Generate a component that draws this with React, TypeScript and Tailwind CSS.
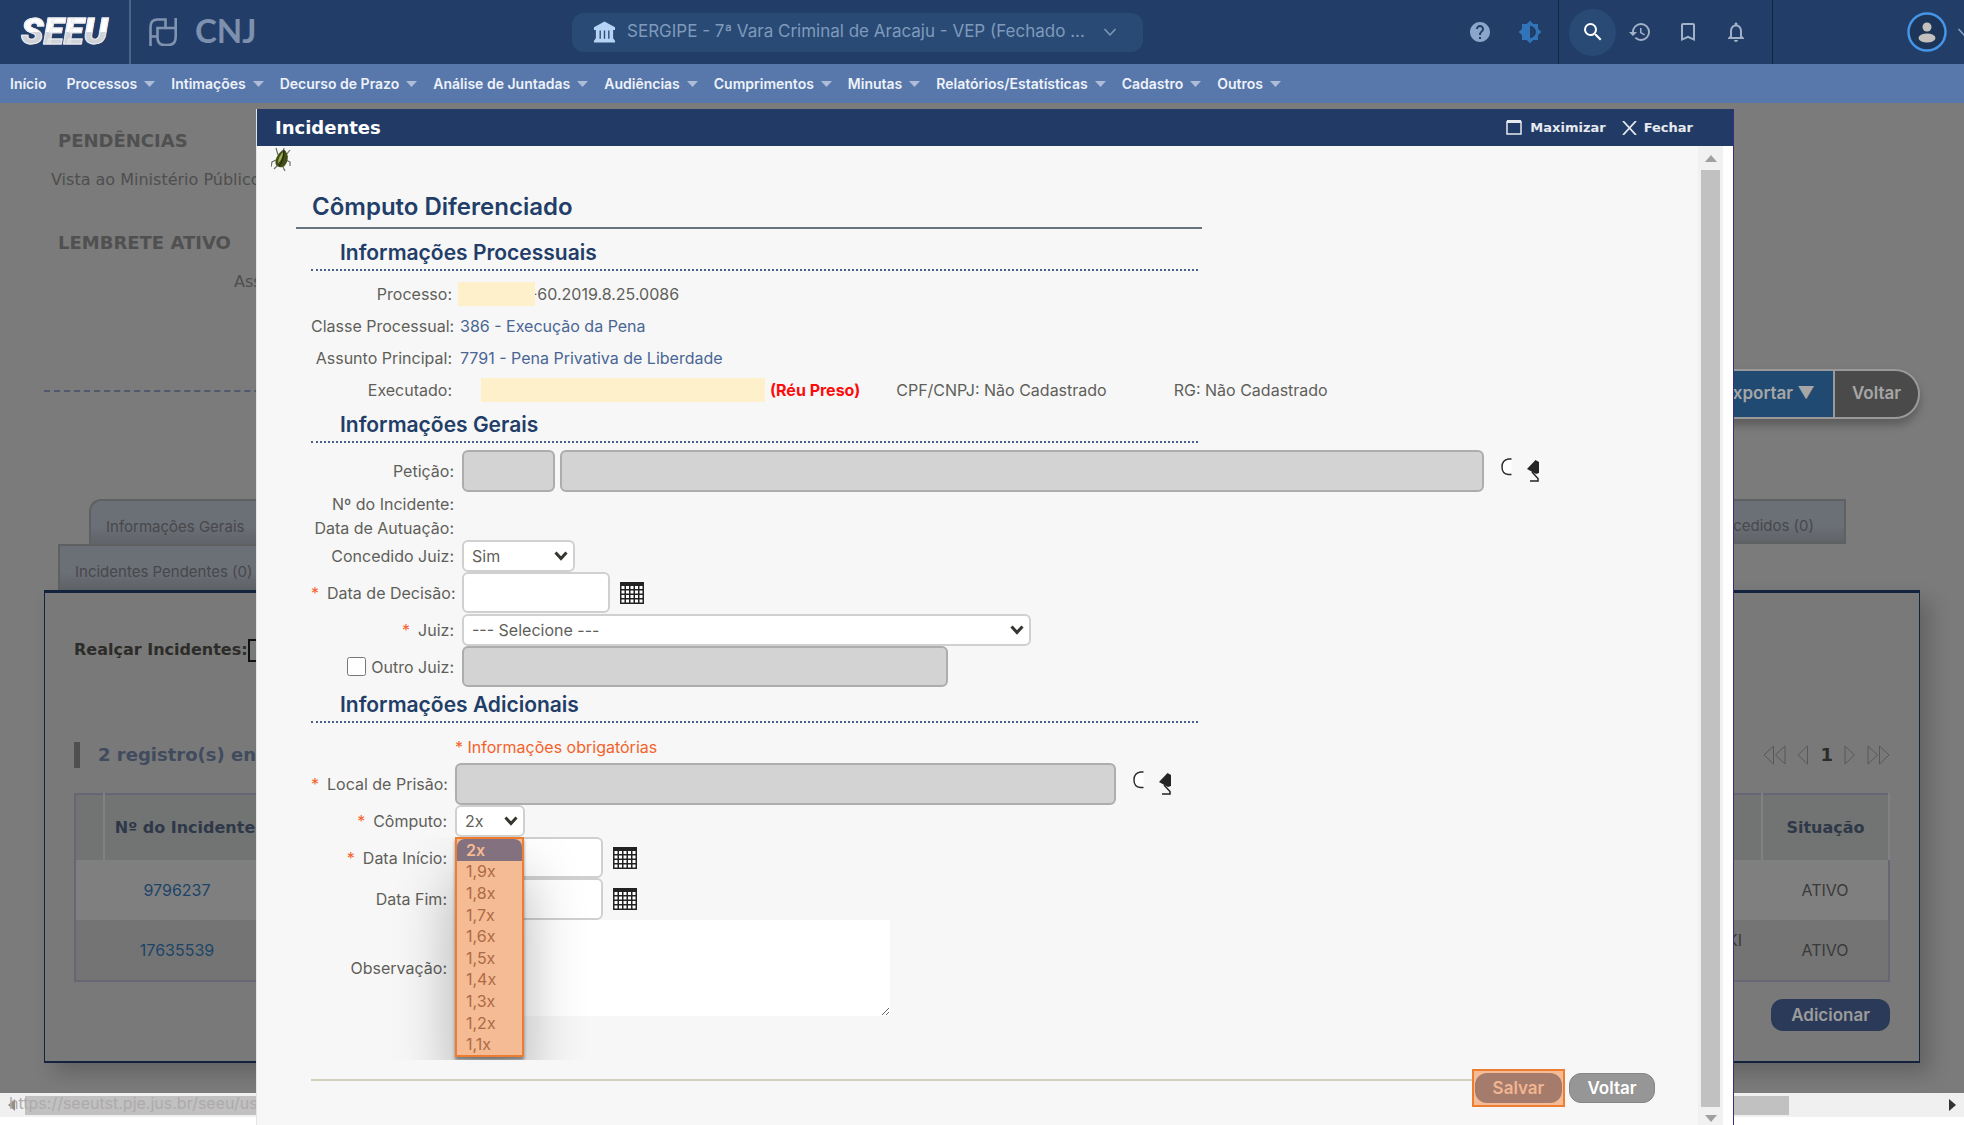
import type { ReactNode } from "react";
import {
  MdBookmarkBorder,
  MdBrightness6,
  MdHelp,
  MdHistory,
  MdNotificationsNone,
  MdSearch,
} from "react-icons/md";

const MENU = [
  "Processos",
  "Intimações",
  "Decurso de Prazo",
  "Análise de Juntadas",
  "Audiências",
  "Cumprimentos",
  "Minutas",
  "Relatórios/Estatísticas",
  "Cadastro",
  "Outros",
];

const FACTORS = ["2x", "1,9x", "1,8x", "1,7x", "1,6x", "1,5x", "1,4x", "1,3x", "1,2x", "1,1x"];

function Chevron({ className }: { className: string }) {
  return (
    <svg viewBox="0 0 14 10" className={className} fill="none" stroke="currentColor" strokeWidth="1.5">
      <path d="M1.5 2 7 8l5.500-6" />
    </svg>
  );
}

function Header() {
  return (
    <header className="grid h-16 grid-cols-[572fr_571px_821fr] items-center overflow-hidden bg-[#223e68]">
      <div className="flex h-full items-center">
        <div className="flex h-full w-[131px] items-center border-r-2 border-[#49648b] pl-[21px]">
          <span className="bg-gradient-to-b from-white from-50% to-[#cfd3d8] to-50% bg-clip-text pr-1 font-[Roboto] text-[37px] leading-9 font-black text-transparent italic [-webkit-text-stroke:1px_#e9ebee]">
            SEEU
          </span>
        </div>
        <svg viewBox="0 0 28 28" className="ml-[18px] h-7 w-7" fill="none" stroke="#8093b0" strokeWidth="2.600">
          <path d="M1.500 28V9q0-7.500 7-7.500h8V10h-8v9.500q0 7.500 7 7.500h3.500q7.700 0 7.700-8V0" />
          <path d="M1.500 18.500h7M16.500 10h10" />
        </svg>
        <span className="ml-[18px] pb-1 font-[Lato] text-[33px] leading-8 font-bold text-[#7d90ae]">CNJ</span>
      </div>

      <button className="flex h-[39px] items-center rounded-xl bg-[#294a75] pl-[21px] text-[17px] text-[#7f9abc]">
        <svg viewBox="0 0 24 22" className="mr-[11px] h-[22px] w-[23px]" fill="#b5d3f5">
          <path d="M12 0 23 6v3h-2v9h1v1.500h1V22H1v-2.500h1V18h1V9H1V6z" />
          <path d="M7.500 9.500v8.500M12 9.500v8.500M16.500 9.500v8.500" stroke="#294a75" strokeWidth="1.400" />
        </svg>
        <span className="whitespace-nowrap">SERGIPE - 7ª Vara Criminal de Aracaju - VEP (Fechado ...</span>
        <Chevron className="ml-[18px] h-[10px] w-[14px]" />
      </button>

      <div className="flex h-full items-center justify-end text-2xl">
        <button aria-label="Ajuda" className="text-[#8ba6c8]">
          <MdHelp />
        </button>
        <button aria-label="Contraste" className="mr-4 ml-[26px] text-[#3274b8]">
          <MdBrightness6 />
        </button>
        <div className="flex h-full items-center gap-6 border-x border-[#14263f] pr-6 pl-[10px] text-[#a3b1c8]">
          <button aria-label="Pesquisar" className="-mr-3 flex h-[47px] w-[47px] items-center justify-center rounded-full bg-[#294a75] text-white">
            <MdSearch />
          </button>
          <button aria-label="Histórico"><MdHistory /></button>
          <button aria-label="Favoritos"><MdBookmarkBorder /></button>
          <button aria-label="Notificações"><MdNotificationsNone /></button>
        </div>
        <button aria-label="Usuário" className="-mr-2 ml-[134px] flex shrink-0 items-center gap-[9px] text-[#8ba6c8]">
          <svg viewBox="0 0 40 40" className="h-10 w-10">
            <circle cx="20" cy="20" r="18.500" fill="#1d3558" stroke="#4695e6" strokeWidth="2.500" />
            <circle cx="20" cy="15" r="4.500" fill="#c4c0bd" />
            <ellipse cx="20" cy="26" rx="8.500" ry="4.500" fill="#c4c0bd" />
          </svg>
          <Chevron className="h-[10px] w-4" />
        </button>
      </div>
    </header>
  );
}

function Nav() {
  return (
    <nav className="flex h-[39px] items-center gap-4 bg-[#5878ac] pl-[10px] text-[14px] font-semibold whitespace-nowrap text-[#eef2f9]">
      <a href="#inicio" className="mr-1">Início</a>
      {MENU.map((m) => (
        <a key={m} href="#menu" className="flex items-center gap-[7px]">
          {m}
          <svg viewBox="0 0 11 6" className="h-[6px] w-[11px]" fill="#aebcd8">
            <path d="M0 0h11L5.500 6z" />
          </svg>
        </a>
      ))}
    </nav>
  );
}

function Pager({ label, flip, twice }: { label: string; flip?: boolean; twice?: boolean }) {
  const single = flip ? "M10.500 1 1 10l9.500 9z" : "M1 1l9.500 9L1 19z";
  const double = flip ? "M10.500 1 1 10l9.500 9zM22 1l-9.500 9 9.500 9z" : "M1 1l9.500 9L1 19zM12.500 1l9.500 9-9.500 9z";
  return (
    <button aria-label={label}>
      <svg
        viewBox={twice ? "0 0 23 20" : "0 0 12 20"}
        className={twice ? "h-5 w-[23px]" : "h-5 w-3"}
        fill="none"
        stroke="#585858"
      >
        <path d={twice ? double : single} />
      </svg>
    </button>
  );
}

function Background() {
  const tab =
    "border-2 border-b-0 border-[#5e6062] bg-gradient-to-b from-[#6b6f76] from-60% to-[#606468] pt-[9px] text-[#48484a]";
  const th = "border-r-2 border-[#7f8280] font-bold text-[#2f3849]";
  return (
    <main className="overflow-hidden bg-[#7b7b7b] pr-11 pb-[30px] pl-11 font-['DejaVu_Sans']">
      <h2 className="mt-[26px] ml-[14px] text-lg leading-6 font-bold text-[#505050]">PENDÊNCIAS</h2>
      <p className="mt-[15px] ml-[7px] text-base leading-6 text-[#4e4e4e]">Vista ao Ministério Público</p>
      <h2 className="mt-[39px] ml-[14px] text-lg leading-6 font-bold text-[#505050]">LEMBRETE ATIVO</h2>
      <p className="mt-[15px] ml-[190px] text-base leading-6 text-[#4e4e4e]">Assunto:</p>

      <div className="mt-[75px] flex">
        <div className="mt-[21px] flex-1 border-t-2 border-dashed border-[#505a6c]" />
        <div className="flex h-[50px] overflow-hidden rounded-r-full border-2 border-[#999] font-[Inter] text-[17px] font-semibold text-[#a6a6a6] shadow-[0_6px_8px_rgba(0,0,0,0.25)]">
          <button className="border-r-2 border-[#999] bg-[#214a72] px-[18px]">Exportar ▼</button>
          <button className="bg-[#4a4a4a] px-[17px]">Voltar</button>
        </div>
      </div>

      <div className="mt-20 font-[Inter] text-[15px]">
        <div className="mr-[74px] ml-[45px] flex justify-between">
          <button className={`${tab} h-[45px] w-[500px] rounded-tl-xl pl-[15px] text-left`}>Informações Gerais</button>
          <button className={`${tab} h-[45px] w-[500px] border-b-2 pr-[30px] text-right`}>Incidentes Concedidos (0)</button>
        </div>
        <button className={`${tab} ml-[14px] block h-[46px] w-[500px] pl-[15px] text-left`}>Incidentes Pendentes (0)</button>
      </div>

      <section className="border border-t-[3px] border-b-2 border-[#13233d] bg-[#797979] pr-[29px] pb-[30px] pl-[29px] shadow-[10px_10px_20px_rgba(0,0,0,0.2)]">
        <label className="mt-[45px] flex h-6 items-center text-base font-bold text-[#2c2c28]">
          Realçar Incidentes:
          <input type="text" className="h-[23px] w-40 border-2 border-[#111]" />
        </label>
        <div className="mt-[80px] flex h-[26px] items-center text-lg font-bold text-[#414b5e]">
          <span className="mr-[18px] h-full w-[6px] bg-[#4f4f4f]" />
          <span className="flex-1">2 registro(s) encontrado(s)</span>
          <div className="flex items-center gap-[11px]">
            <Pager label="Primeira" flip twice />
            <Pager label="Anterior" flip />
            <span className="text-[#2c2c28]">1</span>
            <Pager label="Próxima" />
            <Pager label="Última" twice />
          </div>
        </div>
        <table className="mt-[25px] w-full table-fixed border-2 border-[#686674] text-base">
          <thead>
            <tr className="h-[66px] bg-[#717472]">
              <th className={`${th} w-[29px]`} />
              <th className={`${th} w-[162px]`}>Nº do Incidente</th>
              <th className={th} />
              <th className={`${th} w-[127px]`}>Situação</th>
            </tr>
          </thead>
          <tbody className="text-center font-[Inter] text-[#3a3a3a]">
            <tr className="h-[60px] bg-[#7f7f7f]">
              <td />
              <td className="pr-4 text-[#1c4468]"><a href="#9796237">9796237</a></td>
              <td />
              <td>ATIVO</td>
            </tr>
            <tr className="h-[61px] bg-[#747474]">
              <td />
              <td className="pr-4 text-[#1c4468]"><a href="#17635539">17635539</a></td>
              <td className="pr-5 pb-5 text-right">KI</td>
              <td>ATIVO</td>
            </tr>
          </tbody>
        </table>
        <button className="mt-[17px] ml-auto block h-8 rounded-xl bg-[#2b3a58] px-5 font-[Inter] text-[17px] leading-7 font-semibold text-[#9b9b9b]">
          Adicionar
        </button>
      </section>
    </main>
  );
}

function PageScroll() {
  return (
    <div className="relative flex h-6 items-center bg-[#f0f0f0]">
      <svg viewBox="0 0 7 12" className="ml-2 h-3 w-[7px]" fill="#8e8e8e"><path d="M7 0v12L0 6z" /></svg>
      <div className="mr-[175px] ml-[10px] h-[19px] flex-1 bg-[#c1c1c1]" />
      <svg viewBox="0 0 7 12" className="absolute right-2 h-3 w-[7px]" fill="#333"><path d="M0 0v12l7-6z" /></svg>
      <span className="absolute bottom-1 left-[9px] text-base leading-5 text-[#aeaaaa]">https://seeutst.pje.jus.br/seeu/us</span>
    </div>
  );
}

function Beetle() {
  return (
    <svg viewBox="0 0 20 24" className="h-6 w-5" fill="none">
      <path d="M7 8 5 1M12 6l1-5M15 8l4-5M5 13l-4 2-1 5M7 18l-4 4M15 13l4 2v4M12 20l2 4M14 9l3 1" stroke="#6d6f68" strokeWidth="1.200" />
      <path d="M13 2.500c5 4 5 12 0 17-3 2-8 0-8.500-3C4 11 8 5 13 2.500z" fill="#414f17" />
      <path d="M12 5c-3 3-5 7-5 11 2-1 5-6 5-11z" fill="#a7ad55" />
      <path d="M13 3.500c0 6-2 12-5 15.500" stroke="#1d210b" />
    </svg>
  );
}

function Calendar() {
  return (
    <button aria-label="Abrir calendário" className="ml-[10px]">
      <svg viewBox="0 0 24 22" className="h-[22px] w-6">
        <path d="M0 0h24v22H0z" fill="#222" />
        {[4, 8.5, 13, 17.5].map((y) =>
          [1.5, 6, 10.5, 15, 19.500].map((x) => <rect key={`${x}-${y}`} x={x} y={y} width="3" height="3" fill="#fff" />),
        )}
      </svg>
    </button>
  );
}

function LookupIcons() {
  return (
    <div className="flex pb-[2px]">
      <button aria-label="Pesquisar" className="ml-4 self-start">
        <svg viewBox="0 0 12 18" className="h-[18px] w-3">
          <path d="M11.500 1H8Q2 2.500 2 9t6 8h3.500z" fill="#fff" />
          <path d="M11.500 1H8.500Q2 2 2 9t6.500 7.500h3" fill="none" stroke="#2a2a2a" strokeWidth="1.400" />
        </svg>
      </button>
      <button aria-label="Limpar" className="mt-[2px] ml-[15px]">
        <svg viewBox="0 0 12 22" className="h-[22px] w-3">
          <path d="M8.500 0 12 2v11l-3 1-9-5z" fill="#252525" />
          <path d="M5 12l6 6.500V21H3" fill="none" stroke="#252525" strokeWidth="1.500" />
        </svg>
      </button>
    </div>
  );
}

function SectionTitle({ children }: { children: ReactNode }) {
  return (
    <h2 className="h-[35px] w-[887px] max-w-full border-b-2 border-dotted border-[#4a6089] pl-[29px] text-[21px] leading-[33px] font-semibold text-[#223e68]">
      {children}
    </h2>
  );
}

const LABEL_WIDE = "mr-2 w-[143px] shrink-0 text-right whitespace-nowrap";
const LABEL_NARROW = "mr-2 w-[136px] shrink-0 text-right whitespace-nowrap";

function Row({
  label,
  htmlFor,
  required,
  className,
  narrow,
  children,
}: {
  label: string;
  htmlFor?: string;
  required?: boolean;
  className: string;
  narrow?: boolean;
  children?: ReactNode;
}) {
  return (
    <div className={`flex items-center ${className}`}>
      <label htmlFor={htmlFor} className={narrow ? LABEL_NARROW : LABEL_WIDE}>
        {required && <span className="mr-2 text-[#f4622a]">*</span>}
        {label}
      </label>
      {children}
    </div>
  );
}

const INPUT = "rounded-md border-2 border-[#d0d0d0] bg-white px-2";
const LOCKED = "rounded-md border-2 border-[#adadad] bg-[#d3d3d3] px-2";

function Select({ id, options, className }: { id: string; options: string[]; className: string }) {
  return (
    <div className={`relative ${className}`}>
      <select id={id} className="block h-8 w-full appearance-none rounded-md border-2 border-[#d0d0d0] bg-white pr-5 pl-2">
        {options.map((o) => (
          <option key={o}>{o}</option>
        ))}
      </select>
      <svg
        viewBox="0 0 14 10"
        className="pointer-events-none absolute top-[11px] right-[7px] h-[10px] w-[14px]"
        fill="none"
        stroke="#363630"
        strokeWidth="3"
      >
        <path d="M1.500 1.500 7 7.500l5.500-6" />
      </svg>
    </div>
  );
}

function Info({ label, className, children }: { label: string; className: string; children: ReactNode }) {
  return (
    <div className={`flex items-center ${className}`}>
      <dt className="mr-2 w-[141px] shrink-0 text-right whitespace-nowrap">{label}</dt>
      <dd className="flex items-center whitespace-nowrap">{children}</dd>
    </div>
  );
}

function FactorMenu() {
  return (
    <ul
      role="listbox"
      aria-label="Cômputo"
      className="absolute top-8 left-0 z-10 flex h-[220px] w-[69px] flex-col border-2 border-[#ed7d31] bg-[#f5bb95] text-[#ad6a45] shadow-[0_3px_3px_rgba(0,0,0,0.4),0_40px_60px_rgba(0,0,0,0.3)] [clip-path:inset(0_-80px_-3px_-80px)]"
    >
      {FACTORS.map((f, i) => (
        <li
          key={f}
          role="option"
          aria-selected={i === 0}
          className={`flex flex-1 items-center pl-[9px] leading-5 ${i === 0 ? "rounded-t-lg bg-[#84717f] font-semibold text-[#f5bb95]" : ""}`}
        >
          {f}
        </li>
      ))}
    </ul>
  );
}

function Modal() {
  return (
    <div
      role="dialog"
      aria-label="Incidentes"
      className="absolute top-[109px] right-[230px] bottom-0 left-[256px] flex flex-col overflow-hidden border-r border-l border-r-[#3b2a85] border-l-[#e4e4e4] bg-white"
    >
      <div className="flex h-[37px] shrink-0 items-center bg-[#223b66] pr-10 pl-[18px] font-['DejaVu_Sans'] font-bold text-white">
        <h1 className="flex-1 pt-px text-lg">Incidentes</h1>
        <button className="flex items-center gap-2 text-[13px] text-[#e6e9ee]">
          <svg viewBox="0 0 16 15" className="h-[15px] w-4" fill="none" stroke="currentColor">
            <path d="M1 1.500h14" strokeWidth="3" />
            <path d="M1 1v13h14V1" strokeWidth="1.500" />
          </svg>
          Maximizar
        </button>
        <button className="ml-4 flex items-center gap-[7px] text-[13px] text-[#e6e9ee]">
          <svg viewBox="0 0 15 14" className="h-[14px] w-[15px]" stroke="currentColor" strokeWidth="1.800">
            <path d="M1 0l13 14M14 0 1 14" />
          </svg>
          Fechar
        </button>
      </div>

      <div className="flex min-h-0 flex-1 bg-[#f7f7f7]">
        <div className="min-w-0 flex-1 text-base text-[#5f5f5a]">
          <div className="h-10 pt-px pl-[14px]">
            <Beetle />
          </div>
          <div className="pr-[43px] pl-[54px]">
            <h1 className="-ml-[15px] h-[43px] w-[906px] border-b-2 border-[#68747c] pl-4 text-2xl leading-[42px] font-semibold text-[#223e68]">
              Cômputo Diferenciado
            </h1>

            <div className="mt-[7px]">
              <SectionTitle>Informações Processuais</SectionTitle>
            </div>
            <dl className="mt-[7px]">
              <Info label="Processo:" className="h-8">
                <span className="relative -ml-0.5 h-6 w-[77px] bg-[#fff0cc]" />
                <span className="-ml-[5px]">-60.2019.8.25.0086</span>
              </Info>
              <Info label="Classe Processual:" className="h-8">
                <a href="#classe" className="text-[#4a6694]">386 - Execução da Pena</a>
              </Info>
              <Info label="Assunto Principal:" className="h-8">
                <a href="#assunto" className="text-[#4a6694]">7791 - Pena Privativa de Liberdade</a>
              </Info>
              <Info label="Executado:" className="h-8">
                <span className="ml-[21px] h-6 w-[284px] bg-[#fff0cc]" />
                <span className="ml-[5px] font-bold text-[#fb0d0d]">(Réu Preso)</span>
                <span className="ml-9">CPF/CNPJ: Não Cadastrado</span>
                <span className="ml-[67px]">RG: Não Cadastrado</span>
              </Info>
            </dl>

            <div className="mt-[2px]">
              <SectionTitle>Informações Gerais</SectionTitle>
            </div>
            <div className="mt-[7px]">
              <Row label="Petição:" htmlFor="peticao" className="h-[42px]">
                <input id="peticao" disabled className={`${LOCKED} h-[42px] w-[93px]`} />
                <input aria-label="Descrição da petição" disabled className={`${LOCKED} ml-[5px] h-[42px] w-[924px]`} />
                <LookupIcons />
              </Row>
              <Row label="Nº do Incidente:" className="h-6" />
              <Row label="Data de Autuação:" className="h-6" />
              <Row label="Concedido Juiz:" htmlFor="concedido" className="h-8">
                <Select id="concedido" options={["Sim", "Não"]} className="w-[113px]" />
              </Row>
              <Row label="Data de Decisão:" htmlFor="decisao" required className="h-[41px]">
                <input id="decisao" className={`${INPUT} h-[41px] w-[148px]`} />
                <Calendar />
              </Row>
              <Row label="Juiz:" htmlFor="juiz" required className="h-[33px]">
                <Select id="juiz" options={["--- Selecione ---"]} className="w-[569px]" />
              </Row>
              <div className="flex h-[41px] items-center">
                <label className={`${LABEL_WIDE} flex items-center justify-end gap-[5px]`}>
                  <input type="checkbox" className="h-[19px] w-[19px]" />
                  Outro Juiz:
                </label>
                <input aria-label="Nome do outro juiz" disabled className={`${LOCKED} h-[41px] w-[486px]`} />
              </div>
            </div>

            <div className="mt-px">
              <SectionTitle>Informações Adicionais</SectionTitle>
            </div>
            <p className="mt-[10px] ml-36 leading-7 text-[#f4622a]">* Informações obrigatórias</p>
            <Row narrow label="Local de Prisão:" htmlFor="local" required className="mt-px h-[43px]">
              <input id="local" disabled className={`${LOCKED} h-[42px] w-[661px]`} />
              <LookupIcons />
            </Row>
            <Row narrow label="Cômputo:" htmlFor="computo" required className="h-8">
              <div className="relative">
                <Select id="computo" options={FACTORS} className="w-[70px]" />
                <FactorMenu />
              </div>
            </Row>
            <Row narrow label="Data Início:" htmlFor="inicio" required className="h-[41px]">
              <input id="inicio" className={`${INPUT} h-[41px] w-[148px]`} />
              <Calendar />
            </Row>
            <Row narrow label="Data Fim:" htmlFor="fim" className="h-[42px]">
              <input id="fim" className={`${INPUT} h-[42px] w-[148px]`} />
              <Calendar />
            </Row>
            <Row narrow label="Observação:" htmlFor="obs" className="h-24">
              <textarea id="obs" className="h-24 w-[435px] bg-white" />
            </Row>

            <div className="mt-[53px] flex items-start">
              <div className="mt-[10px] flex-1 border-t-2 border-[#d3d1bd]" />
              <div className="border-2 border-[#ed7d31] bg-[#f5bb95] px-px py-[2px]">
                <button className="block h-[30px] w-[87px] rounded-xl bg-[#a57b6b] text-[17px] leading-[30px] font-semibold text-[#f1b591]">
                  Salvar
                </button>
              </div>
              <button className="mt-1 ml-1 h-[30px] w-[86px] rounded-xl border border-[#858585] bg-[#969696] text-[17px] leading-7 font-semibold text-white">
                Voltar
              </button>
            </div>
          </div>
        </div>

        <div className="flex w-[25px] flex-col items-center bg-[#f1f1f1] py-[9px]">
          <svg viewBox="0 0 12 7" className="h-[7px] w-3" fill="#a0a0a0"><path d="M6 0l6 7H0z" /></svg>
          <div className="my-2 w-[19px] flex-1 bg-[#c1c1c1]" />
          <svg viewBox="0 0 12 7" className="-mb-1.5 h-[7px] w-3" fill="#a0a0a0"><path d="M6 7l6-7H0z" /></svg>
        </div>
        <div className="w-[10px] bg-white" />
      </div>
    </div>
  );
}

export default function App() {
  return (
    <div className="relative min-h-screen overflow-hidden bg-white font-[Inter]">
      <Header />
      <Nav />
      <Background />
      <PageScroll />
      <Modal />
    </div>
  );
}
